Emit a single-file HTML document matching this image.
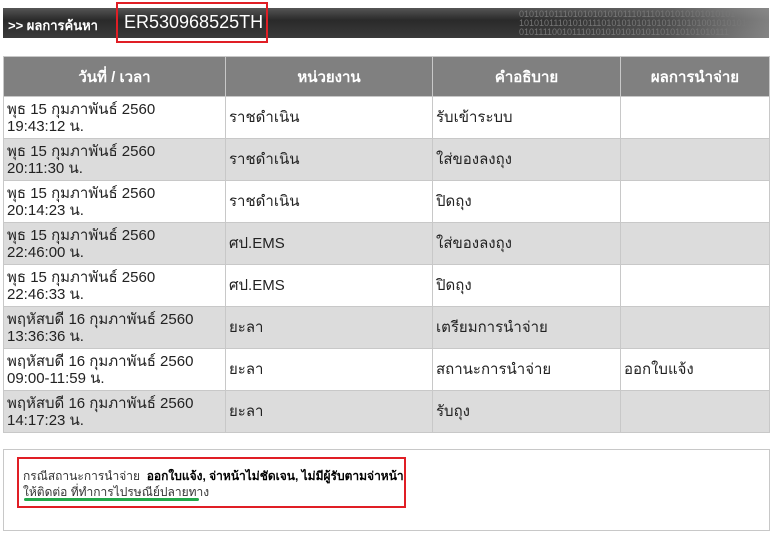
<!DOCTYPE html>
<html><head><meta charset="utf-8"><style>
body{margin:0;width:774px;height:533px;background:#fff;position:relative;overflow:hidden;font-family:"Liberation Sans",Tahoma,sans-serif;}
.bar{position:absolute;left:3px;top:8px;width:766px;height:30px;background:linear-gradient(180deg,#555 0%,#2a2a2a 40%,#3a3a3a 100%);}
.bar .bits{position:absolute;right:0;top:0;width:250px;height:30px;background:linear-gradient(90deg,rgba(120,120,120,0),rgba(110,110,110,.5) 60%,rgba(150,150,150,.8));color:#777;font-size:9px;line-height:9px;padding-top:2px;box-sizing:border-box;overflow:hidden;white-space:nowrap;}
.t1{position:absolute;left:8px;top:15px;color:#fff;font-size:13px;font-weight:bold;}
.t2{position:absolute;left:124px;top:12px;color:#fff;font-size:18px;}
.red1{position:absolute;left:116px;top:2px;width:148px;height:37px;border:2px solid #e01e25;}
table{position:absolute;left:3px;top:56px;border-collapse:collapse;width:767px;table-layout:fixed;font-size:15px;color:#222;}
th{background:#808080;color:#fff;height:39px;padding:0;font-size:15px;border:1px solid #c8c8c8;}
td{height:42px;box-sizing:border-box;border:1px solid #c8c8c8;padding:0 3px;line-height:17px;vertical-align:middle;overflow:hidden;white-space:nowrap;}
tr:nth-child(odd) td{background:#dcdcdc;}
.box{position:absolute;left:3px;top:449px;width:765px;height:80px;border:1px solid #c8c8c8;}
.red2{position:absolute;left:17px;top:457px;width:385px;height:47px;border:2px solid #e01e25;font-size:12px;color:#333;}
.green{position:absolute;left:24px;top:498px;width:175px;height:3px;border-radius:2px;background:#22a84a;}
</style></head><body>
<div class="bar"><div class="bits">01010101110101010101011101110101010101010101<br>1010101110101011101010101010101010101001010101<br>0101111001011101010101010101101010101010111</div></div>
<div class="t1">&gt;&gt; ผลการค้นหา</div>
<div class="t2">ER530968525TH</div>
<div class="red1"></div>
<table>
<colgroup><col style="width:222px"><col style="width:207px"><col style="width:188px"><col></colgroup>
<tr><th>วันที่ / เวลา</th><th>หน่วยงาน</th><th>คำอธิบาย</th><th>ผลการนำจ่าย</th></tr>
<tr><td>พุธ 15 กุมภาพันธ์ 2560<br>19:43:12 น.</td><td>ราชดำเนิน</td><td>รับเข้าระบบ</td><td></td></tr>
<tr><td>พุธ 15 กุมภาพันธ์ 2560<br>20:11:30 น.</td><td>ราชดำเนิน</td><td>ใส่ของลงถุง</td><td></td></tr>
<tr><td>พุธ 15 กุมภาพันธ์ 2560<br>20:14:23 น.</td><td>ราชดำเนิน</td><td>ปิดถุง</td><td></td></tr>
<tr><td>พุธ 15 กุมภาพันธ์ 2560<br>22:46:00 น.</td><td>ศป.EMS</td><td>ใส่ของลงถุง</td><td></td></tr>
<tr><td>พุธ 15 กุมภาพันธ์ 2560<br>22:46:33 น.</td><td>ศป.EMS</td><td>ปิดถุง</td><td></td></tr>
<tr><td>พฤหัสบดี 16 กุมภาพันธ์ 2560<br>13:36:36 น.</td><td>ยะลา</td><td>เตรียมการนำจ่าย</td><td></td></tr>
<tr><td>พฤหัสบดี 16 กุมภาพันธ์ 2560<br>09:00-11:59 น.</td><td>ยะลา</td><td>สถานะการนำจ่าย</td><td>ออกใบแจ้ง</td></tr>
<tr><td>พฤหัสบดี 16 กุมภาพันธ์ 2560<br>14:17:23 น.</td><td>ยะลา</td><td>รับถุง</td><td></td></tr>
</table>
<div class="box"></div>
<div class="red2"><div style="position:absolute;left:4px;top:8px;white-space:nowrap">กรณีสถานะการนำจ่าย &nbsp;<b style="color:#000">ออกใบแจ้ง, จ่าหน้าไม่ชัดเจน, ไม่มีผู้รับตามจ่าหน้า</b></div><div style="position:absolute;left:4px;top:24px">ให้ติดต่อ ที่ทำการไปรษณีย์ปลายทาง</div></div>
<div class="green"></div>
</body></html>
